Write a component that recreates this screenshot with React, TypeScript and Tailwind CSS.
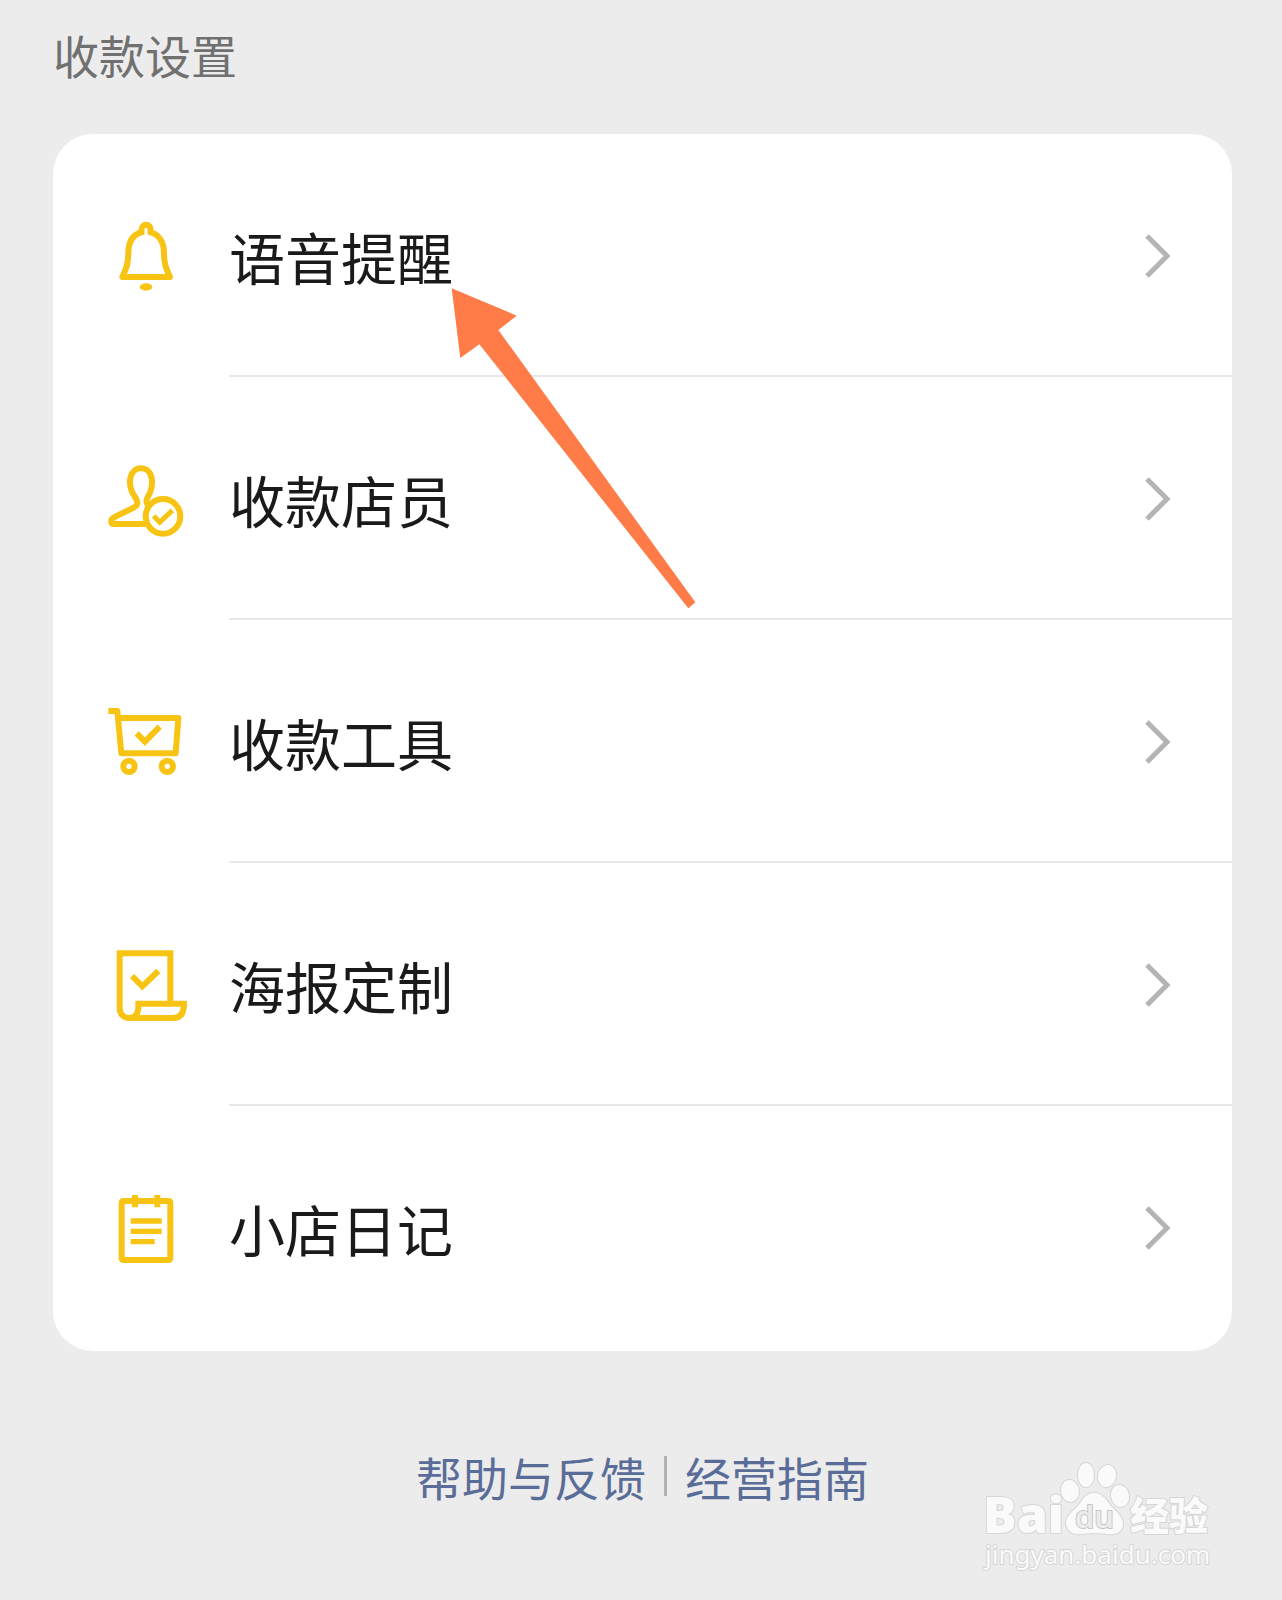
import type { ReactNode } from "react";

function Icon({ children, viewBox = "0 0 360 330" }: { children: ReactNode; viewBox?: string }) {
  return (
    <svg
      aria-hidden="true"
      viewBox={viewBox}
      className="h-[110px] w-[120px] fill-none stroke-[#f8c414] stroke-[18]"
    >
      {children}
    </svg>
  );
}

function BellIcon() {
  return (
    <Icon viewBox="0 3 360 330">
      <path
        strokeLinejoin="round"
        d="M168 94C132 98 115 122 115 160C115 193 108 206 97 231H240C229 206 222 193 222 160C222 122 204 98 168 94Z"
      />
      <path d="M155 99V88A13 13 0 0 1 182 88V99" />
      <path stroke="#fff" strokeWidth="9" d="M168 85V106" />
      <ellipse cx="168" cy="261" rx="19" ry="11" className="fill-[#f8c414] stroke-none" />
    </Icon>
  );
}

function StaffIcon() {
  return (
    <Icon viewBox="0 -4 360 330">
      <path
        strokeLinejoin="round"
        d="M166 236H70C63 236 61 223 69 218C96 201 128 192 139 181C145 174 141 164 135 155C123 139 119 124 120 105C122 82 136 69 153 69C171 69 184 82 186 105C187 125 183 139 174 154C167 165 167 171 174 180"
      />
      <circle cx="219" cy="213" r="52" />
      <path strokeWidth="15" d="M191 212L209 231L247 195" />
    </Icon>
  );
}

function CartIcon() {
  return (
    <Icon viewBox="0 -9 360 330">
      <path strokeLinejoin="round" d="M55 63H82L94 190H257L265 84H85" />
      <path d="M140 130L165 155L209 110" />
      <circle cx="117" cy="229" r="17" />
      <circle cx="232" cy="229" r="17" />
    </Icon>
  );
}

function PosterIcon() {
  return (
    <Icon>
      <path d="M241 220V70H89V233C89 253 101 264 120 264H250C272 264 282 248 282 221H145V232C145 252 133 264 119 264" />
      <path d="M126 138L157 169L205 123" />
    </Icon>
  );
}

function DiaryIcon() {
  return (
    <Icon viewBox="0 -6 360 330">
      <rect x="95" y="78" width="146" height="177" rx="5" />
      <path d="M135 60V97M202 60V97" />
      <path strokeWidth="16" d="M122 138H215M122 169H215M122 200H194" />
    </Icon>
  );
}

const items = [
  { label: "语音提醒", icon: <BellIcon /> },
  { label: "收款店员", icon: <StaffIcon /> },
  { label: "收款工具", icon: <CartIcon /> },
  { label: "海报定制", icon: <PosterIcon /> },
  { label: "小店日记", icon: <DiaryIcon /> },
];

function Chevron() {
  return (
    <svg
      aria-hidden="true"
      viewBox="0 0 28 48"
      className="h-12 w-7 fill-none stroke-[#b4b4b4] stroke-[5]"
    >
      <path d="M3 4L23 24L3 44" />
    </svg>
  );
}

function Arrow() {
  return (
    <svg
      aria-hidden="true"
      viewBox="0 0 870 1050"
      className="pointer-events-none absolute left-[377px] top-[136px] h-[350px] w-[290px] fill-[#ff7b47]"
    >
      <path d="M65 55L260 137L205 180L796 997L775 1015L148 223L91 264Z" />
    </svg>
  );
}

function Watermark() {
  return (
    <svg
      role="img"
      aria-label="Baidu jingyan"
      viewBox="0 0 280 150"
      className="pointer-events-none absolute right-[42px] bottom-[10px] h-[150px] w-[280px] fill-[#fafafa] stroke-[#d6d6d6] stroke-2 [paint-order:stroke]"
    >
      <text x="23" y="93" className="font-['Open_Sans'] text-[50px] font-extrabold">
        Bai
      </text>
      <ellipse cx="110" cy="51" rx="9" ry="11" transform="rotate(-8 110 51)" />
      <ellipse cx="126" cy="35" rx="8" ry="12" />
      <ellipse cx="147" cy="36" rx="9" ry="11" transform="rotate(12 147 36)" />
      <ellipse cx="160" cy="56" rx="9" ry="11" transform="rotate(-12 160 56)" />
      <path d="M134 53C143 53 147 61 152 67C158 73 163 77 163 84C163 92 156 95 148 94C138 93 130 93 121 94C113 95 106 91 106 83C106 76 112 72 117 67C122 61 125 53 134 53Z" />
      <text
        x="115"
        y="88"
        className="fill-[#ececec] stroke-[#c6c6c6] font-['Open_Sans'] text-[31px] font-semibold"
      >
        du
      </text>
      <text x="170" y="90" className="font-['Noto_Sans_CJK_SC'] text-[39px] font-black">
        经验
      </text>
      <text x="25" y="124" className="font-['Noto_Sans'] text-[26px]">
        jingyan.baidu.com
      </text>
    </svg>
  );
}

export default function App() {
  return (
    <div className="relative min-h-screen bg-[#ececec] pr-[50px] pl-[53px] font-['Noto_Sans_CJK_SC',sans-serif]">
      <h1 className="pt-[22px] text-[46px] leading-[64px] text-[#707070]">收款设置</h1>

      <main className="relative mt-12 rounded-[40px] bg-white pb-[2px]">
        <ul>
          {items.map((item) => (
            <li key={item.label} className="group">
              <a href="#" className="flex h-[243px]">
                <span className="flex w-[176px] items-center pl-[37px]">{item.icon}</span>
                <span className="flex flex-1 items-center justify-between border-b-2 border-[#e8e8e8] pt-[2px] pr-[60px] group-last:border-transparent">
                  <span className="text-[56px] leading-[80px] text-[#1a1a1a]">{item.label}</span>
                  <Chevron />
                </span>
              </a>
            </li>
          ))}
        </ul>
        <Arrow />
      </main>

      <footer className="mt-[93px] flex items-center justify-center gap-[18px] text-[46px] leading-[64px] text-[#5a6d98]">
        <a href="#">帮助与反馈</a>
        <span className="h-10 w-[3px] bg-[#b2b2b2]" />
        <a href="#">经营指南</a>
      </footer>

      <Watermark />
    </div>
  );
}
